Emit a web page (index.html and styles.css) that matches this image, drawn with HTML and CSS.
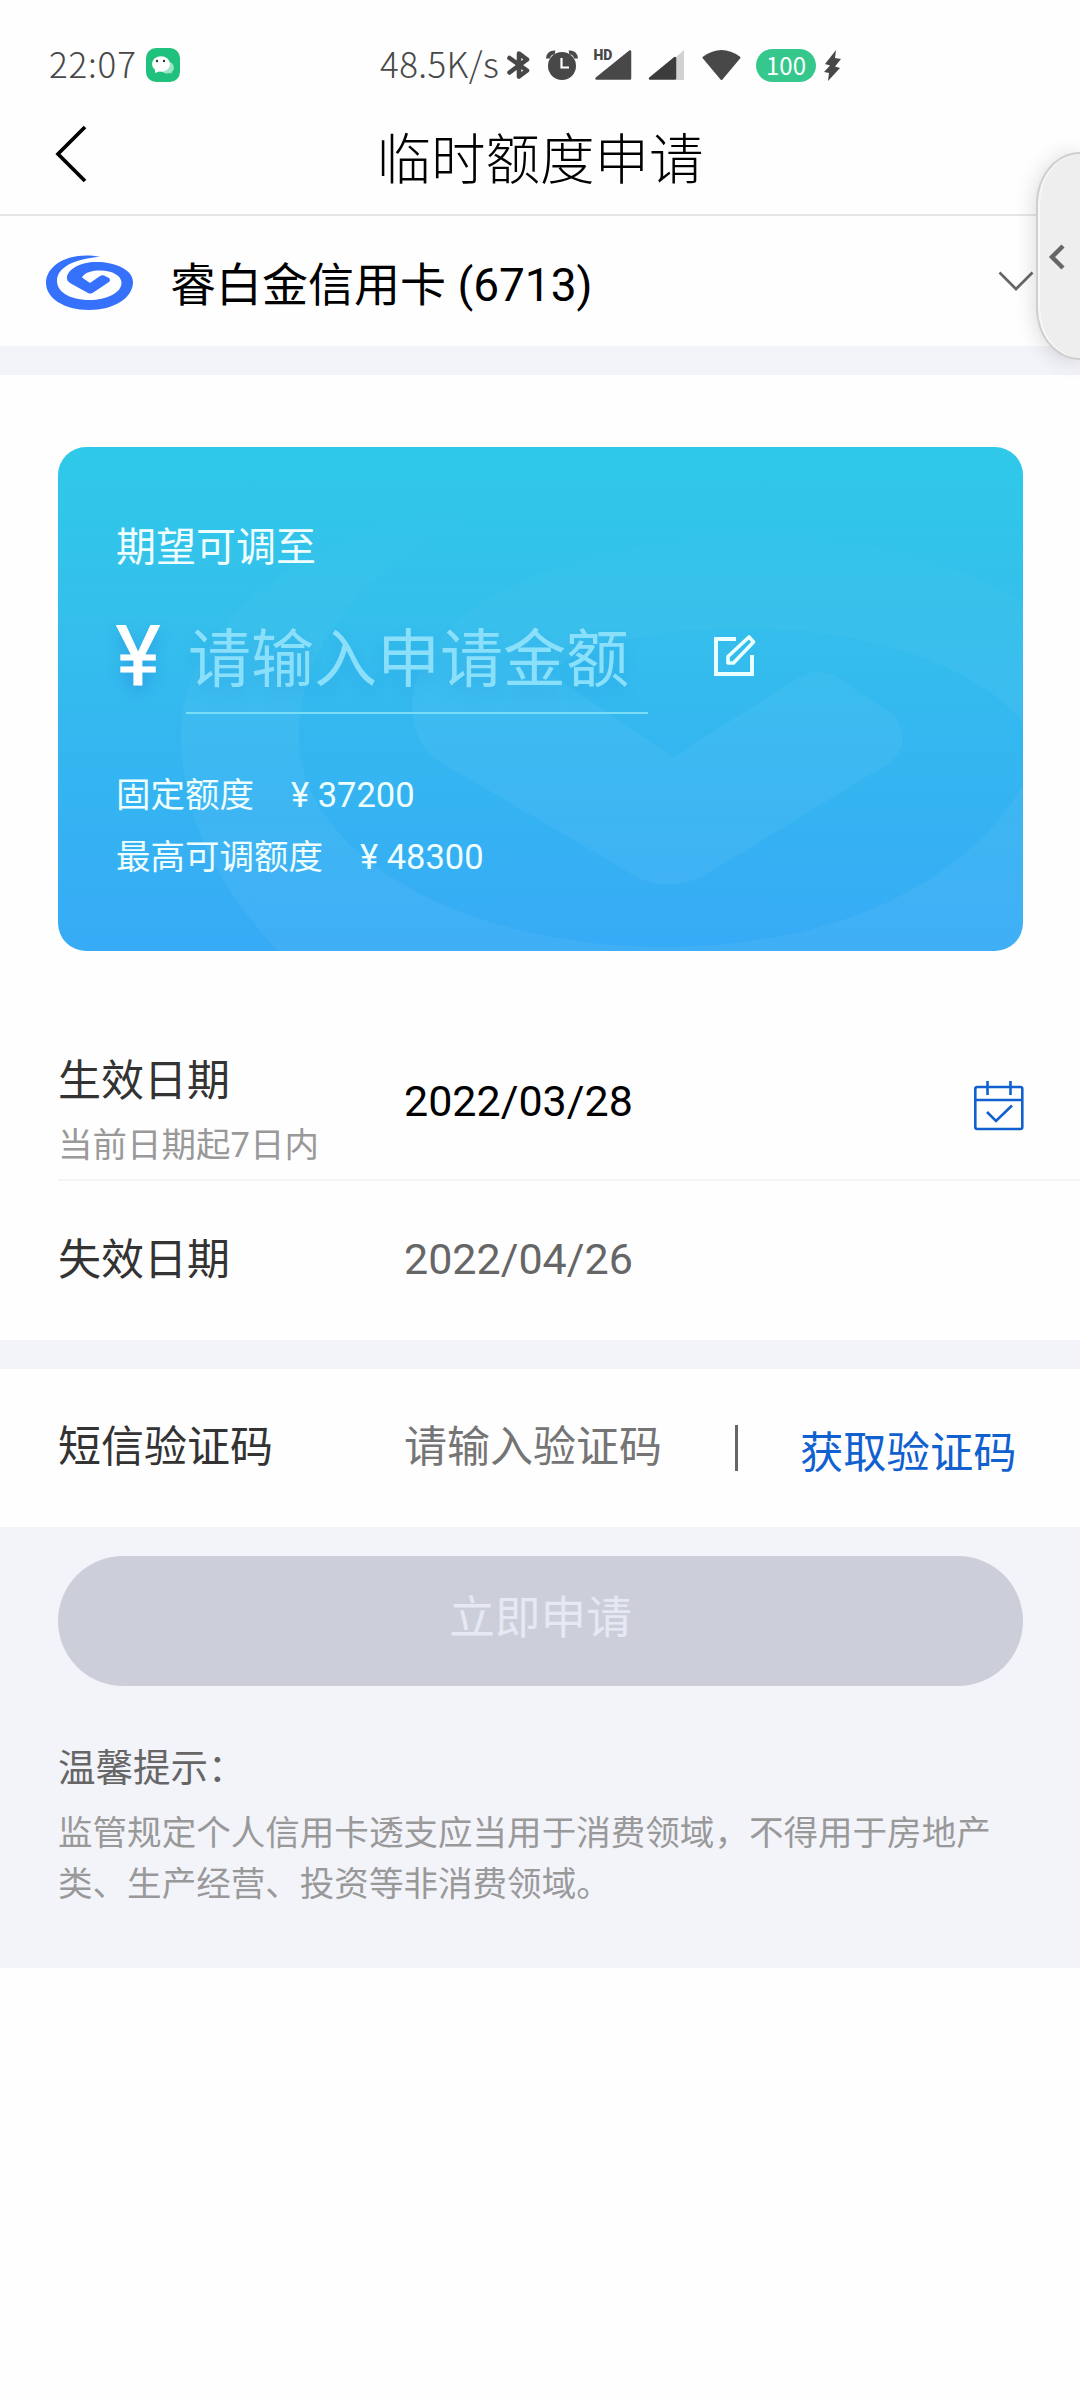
FILE: index.html
```html
<!DOCTYPE html>
<html lang="zh-CN">
<head>
<meta charset="utf-8">
<title>临时额度申请</title>
<link rel="stylesheet" href="styles.css">
</head>
<body>
<div class="status">
  <span class="clock">22:07</span>
  <svg class="wechat" viewBox="0 0 34 34"><rect width="34" height="34" rx="10" fill="#20c17c"/><ellipse cx="21" cy="19.500" rx="7" ry="6" fill="#9fe6c8"/><path d="M23 24l3 2-1-4z" fill="#9fe6c8"/><ellipse cx="15" cy="16" rx="9" ry="7.800" fill="#fff"/><path d="M9 20v5l5-2z" fill="#fff"/><circle cx="11" cy="13" r="1.200" fill="#333"/><circle cx="18" cy="13" r="1.200" fill="#333"/></svg>
  <span class="speed">48.5K/s</span>
  <svg class="bt" viewBox="0 0 24 30"><path d="M2.500 8L20 20.500 12 26.500V3.500L20 9.500 2.500 22.500" fill="none" stroke="#484848" stroke-width="4.600" stroke-linejoin="round" stroke-linecap="round"/></svg>
  <svg class="alarm" viewBox="0 0 32 30"><circle cx="16" cy="16" r="14" fill="#484848"/><path d="M2 8.500A6 6 0 0 1 9 2.500M30 8.500A6 6 0 0 0 23 2.500" fill="none" stroke="#484848" stroke-width="4"/><path d="M15.500 8v9.500H23" fill="none" stroke="#fff" stroke-width="2.200"/></svg>
  <svg class="sig" viewBox="0 0 37 30"><path d="M36 1.500v27H2.500z" fill="#484848" stroke="#484848" stroke-width="2.500" stroke-linejoin="round"/><text x="-.500" y="10" class="hd">HD</text></svg>
  <svg class="sig2" viewBox="0 0 37 30"><path d="M28 7L36 0v30h-8z" fill="#d2d2d2"/><path d="M27 8v20.500H2z" fill="#3c3c3c" stroke="#3c3c3c" stroke-width="2.500" stroke-linejoin="round"/></svg>
  <svg class="wifi" viewBox="0 0 39 30"><path d="M1.500 7.500Q19.500-5.500 37.500 7.500L19.500 29z" fill="#484848" stroke="#484848" stroke-width="2" stroke-linejoin="round"/></svg>
  <span class="battery">100</span>
  <svg class="bolt" viewBox="0 0 17 31"><path d="M12 0L1 14l5 1.500L0 22l5 1-1 8L16 18l-5-1.500L17 9l-6-1z" fill="#484848"/></svg>
</div>
<header class="nav">
  <svg class="back" viewBox="0 0 34 60"><path d="M31 3L4 30 31 57" fill="none" stroke="#000" stroke-width="3.700"/></svg>
  <h1>临时额度申请</h1>
</header>
<div class="picker">
  <svg class="logo" viewBox="0 0 87 55"><path d="M54 1.800C25-4 0 9 0 28C0 43 18 55 43 55C68 55 87 43 87 27C87 15 70 7 50 7C34 7 20 15 21 24Q21 26 24 28L42 38Q45 39.500 48 37L63 27Q65 25 63 23L58 20.500Q56 20 54 21L44 28 36 22.500C39 17 47 15.500 54 15.500C67 15.500 75.500 21 75.500 28C75.500 38 60 45 44 45C26 45 11 38 11 26C11 13 27 4 54 1.800Z" fill="#3571fa"/></svg>
  <span class="card-name">睿白金信用卡 (6713)</span>
  <svg class="down" viewBox="0 0 36 22"><path d="M1.500 2.500L18 19 34.500 2.500" fill="none" stroke="#666" stroke-width="2.700"/></svg>
</div>
<main>
  <section class="hero">
    <svg class="watermark" viewBox="0 0 965 504">
      <defs><linearGradient id="fade" x1="0" y1="0" x2="0" y2="504" gradientUnits="userSpaceOnUse"><stop offset=".1" stop-color="#fff" stop-opacity="0"/><stop offset=".55" stop-color="#fff" stop-opacity=".045"/></linearGradient></defs>
      <path fill="url(#fade)" fill-rule="evenodd" d="M965 338C925 410 812 500 607 500C400 500 241 405 241 290C241 190 320 90 500 40C270 60 123 170 123 285C123 370 160 440 220 504H965ZM965 275C925 225 820 181 690 181C600 181 530 196 490 225L615 310 742 230Q758 221 775 228L835 268Q855 292 833 315L647 428Q612 446 579 430L382 315Q354 298 354 255C365 150 530 90 700 90C820 90 910 120 965 155Z"/>
    </svg>
    <div class="hero-body">
      <p class="expect">期望可调至</p>
      <div class="amount"><span class="yen">¥</span><span class="field">请输入申请金额</span>
        <svg class="edit" viewBox="0 0 42 42"><path d="M22 4H2v35h36V20" fill="none" stroke="#eaffff" stroke-width="4"/><path d="M14 28v-6.500L35 2l4.500 5L19.500 28z" fill="none" stroke="#eaffff" stroke-width="3.600" stroke-linejoin="round"/></svg></div>
      <p class="limit">固定额度<span>¥ 37200</span></p>
      <p class="limit">最高可调额度<span>¥ 48300</span></p>
    </div>
  </section>
  <section class="row start">
    <div class="label">生效日期<small>当前日期起7日内</small></div>
    <span class="value">2022/03/28</span>
    <svg class="cal" viewBox="0 0 50 50"><g fill="none" stroke="#1160cf" stroke-width="2.600"><rect x="1.300" y="6" width="47" height="42" rx="2"/><path d="M1 19h47M13.500 0v14M36.500 0v14"/><path d="M13 31l9 9 16-15.500"/></g></svg>
  </section>
  <section class="row end"><div class="label">失效日期</div><span class="value muted">2022/04/26</span></section>
</main>
<section class="row sms">
  <div class="label">短信验证码</div>
  <span class="value hint">请输入验证码</span>
  <i class="bar"></i>
  <a class="get">获取验证码</a>
</section>
<footer>
  <div class="submit">立即申请</div>
  <h2>温馨提示：</h2>
  <p class="note">监管规定个人信用卡透支应当用于消费领域，不得用于房地产类、生产经营、投资等非消费领域。</p>
</footer>
<aside class="handle"><svg viewBox="0 0 18 30"><path d="M15 4L4 15l11 11" fill="none" stroke="#666" stroke-width="4.400"/></svg></aside>
</body>
</html>
```
FILE: styles.css
```css
* { box-sizing: border-box; margin: 0; padding: 0; }
body { width: 1080px; height: 2400px; position: relative; overflow: hidden; background: #fefefe; font-family: Roboto, "Noto Sans CJK SC", sans-serif; color: #333; }
svg { display: block; flex: none; overflow: visible; }
span, h1, h2, .label, .get { white-space: nowrap; }

.status { height: 113px; padding: 17px 0 0 49px; display: flex; align-items: center; color: #484848; font-family: "Noto Sans CJK SC", sans-serif; font-weight: 300; font-size: 35px; line-height: 34px; }
.clock { width: 97px; letter-spacing: .8px; margin-top: -4px; }
.wechat { width: 34px; height: 34px; }
.speed { margin: -4px 0 0 200px; width: 127px; letter-spacing: .4px; }
.bt { width: 24px; height: 30px; }
.alarm { width: 32px; height: 30px; margin-left: 15px; }
.sig { width: 37px; height: 30px; margin-left: 16px; }
.hd { font: 900 14px Roboto, sans-serif; fill: #484848; }
.sig2 { width: 37px; height: 30px; margin-left: 17px; }
.wifi { width: 39px; height: 30px; margin-left: 17px; }
.battery { width: 60px; height: 33px; margin-left: 15px; border-radius: 17px; background: #36c78c; color: #fff; font-size: 24px; line-height: 31px; text-align: center; font-weight: 400; }
.bolt { width: 17px; height: 31px; margin-left: 8px; }

.nav { height: 103px; display: grid; grid-template-columns: 88px 1fr 88px; border-bottom: 2px solid #e6e6e6; }
.back { width: 34px; height: 60px; margin: 11px 0 0 54px; }
h1 { font-size: 54.500px; font-weight: 300; line-height: 60px; margin-top: 17px; text-align: center; color: #000; }

.picker { height: 130px; display: flex; align-items: center; padding: 2px 46px 0 46px; }
.logo { width: 87px; height: 55px; }
.card-name { flex: 1; margin: -3px 0 0 37px; font-size: 46px; color: #000; }
.down { width: 36px; height: 22px; margin-top: -2px; }

main { border-top: 29px solid #f3f4fa; height: 994px; }
.hero { position: relative; width: 965px; height: 504px; margin: 72px 0 0 58px; border-radius: 28px; overflow: hidden; background: linear-gradient(#2fc9e9, #34c0eb 30%, #34b6f0 60%, #37abf6); color: #effeff; }
.watermark { position: absolute; left: 0; top: 0; width: 965px; height: 504px; }
.hero-body { position: relative; padding: 71px 58px 0; }
.expect { font-size: 40px; line-height: 60px; }
.amount { display: flex; height: 136px; }
.yen { width: 70px; font-size: 84px; font-weight: 400; line-height: 84px; padding-top: 37px; color: #fff; text-shadow: 0 8px 14px rgba(30,120,220,.45); -webkit-text-stroke: 1px #fff; }
.field { width: 462px; border-bottom: 2px solid #7adcf6; font-size: 63px; line-height: 84px; padding-top: 40px; padding-left: 2px; color: #8adffb; text-shadow: 0 8px 14px rgba(30,120,220,.18); }
.edit { width: 42px; height: 42px; margin: 57px 0 0 66px; }
.limit { font-size: 34.500px; line-height: 62px; }
.amount + .limit { margin-top: 50px; }
.limit span { margin-left: 37px; }

.row { display: flex; align-items: center; padding-left: 58px; }
.label { width: 346px; font-size: 43px; line-height: 60px; }
.label small { display: block; font-size: 34.500px; line-height: 50px; color: #999; margin-top: 9px; }
.value { font-size: 43px; line-height: 50px; color: #000; }
.muted { color: #666; margin-top: -2px; }
.hint { color: #757575; }
.start { margin: 75px 0 0 58px; height: 155px; padding-left: 0; border-bottom: 2px solid #f4f4f8; align-items: flex-start; padding-top: 25px; }
.start .value { margin-top: 25px; }
.cal { width: 50px; height: 50px; margin: 30px 0 0 341px; }
.end { height: 158px; }
.end .label { margin-top: -1px; }
.sms { height: 187px; border-top: 29px solid #f3f4fa; padding-bottom: 2px; }
.bar { width: 3px; height: 46px; background: #666; margin: 2px 0 0 73px; }
.get { margin: 4px 0 0 62px; font-size: 43.300px; color: #1160cf; }
footer { background: #f3f4fa; height: 441px; padding: 29px 57px 0 58px; }
.submit { height: 130px; border-radius: 65px; background: #cccfda; color: #e6e8f3; font-size: 45.700px; line-height: 126px; text-align: center; }
h2 { font-size: 37.500px; font-weight: 400; line-height: 50px; margin-top: 57px; color: #666; }
.note { width: 940px; font-size: 34.560px; line-height: 51px; color: #999; margin-top: 15px; }
.handle { position: absolute; left: 1036px; top: 152px; width: 44px; height: 208px; border: 2px solid #cfcfcf; border-right: 0; border-radius: 44px 0 0 44px / 52px 0 0 52px; background: #eee; box-shadow: inset 2px 0 0 0 #f8f8f8, 0 2px 22px rgba(0,0,0,.16); }
.handle svg { width: 18px; height: 30px; margin: 88px 0 0 10px; }
```
